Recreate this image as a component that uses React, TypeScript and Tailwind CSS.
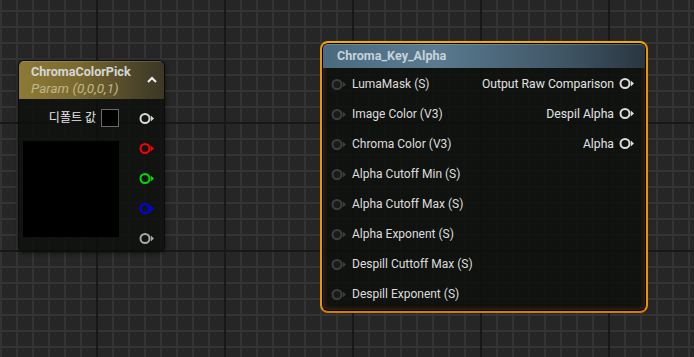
import React from "react";

function Pin({ color, fill = "none" }: { color: string; fill?: string }) {
  return (
    <svg width="16" height="13" viewBox="0 0 16 13" className="block shrink-0">
      <circle cx="6" cy="6.5" r="4.5" fill={fill} stroke={color} strokeWidth="2" />
      <path d="M11.8 3.6 L15 6.5 L11.8 9.4 Z" fill={color} />
    </svg>
  );
}

const inputs = [
  "LumaMask (S)",
  "Image Color (V3)",
  "Chroma Color (V3)",
  "Alpha Cutoff Min (S)",
  "Alpha Cutoff Max (S)",
  "Alpha Exponent (S)",
  "Despill Cuttoff Max (S)",
  "Despill Exponent (S)",
];
const outputs = ["Output Raw Comparison", "Despil Alpha", "Alpha"];

export default function App() {
  return (
    <div
      className="relative w-[694px] h-[357px] overflow-hidden bg-[#262626] font-['Roboto','Noto_Sans_CJK_KR',sans-serif] text-[12px] [background-image:linear-gradient(to_right,#181818_2px,transparent_2px),linear-gradient(to_bottom,#181818_2px,transparent_2px),linear-gradient(to_right,#343434_2px,transparent_2px),linear-gradient(to_bottom,#343434_2px,transparent_2px)] [background-size:128px_128px,128px_128px,16px_16px,16px_16px] [background-position:96px_0,0_122px,0_0,0_10px]"
    >
      {/* Node 1: ChromaColorPick */}
      <div className="absolute left-[18px] top-[60px] w-[147px] h-[192px] rounded-[6px] border border-[#0b0b0b] bg-[rgba(13,15,13,0.84)] shadow-[0_1px_4px_rgba(0,0,0,0.6)] overflow-hidden">
        <div className="relative h-[38px] pl-[12px] pt-[3px] bg-[linear-gradient(to_right,#8d7a36_0%,#7a6a2f_40%,#4c4529_80%,#3a3726_100%)] shadow-[inset_0_1px_0_rgba(255,255,255,0.15)]">
          <div className="leading-[16px] font-bold text-[12.6px] text-[#d6d6d6]">ChromaColorPick</div>
          <div className="leading-[16px] italic text-[13.5px] text-[#c4b58a]">Param (0,0,0,1)</div>
          <svg
            width="10"
            height="7"
            viewBox="0 0 10 7"
            className="absolute right-[7px] top-[15px]"
          >
            <path d="M1 6 L5 2 L9 6" fill="none" stroke="#f2f2f2" strokeWidth="2" />
          </svg>
        </div>
        <div className="flex pt-[4px]">
          <div className="w-[120px] pl-[4px] flex flex-col">
            <div className="h-[30px] flex items-center justify-end gap-[5px] pr-[20px]">
              <span className="text-[#e6e6e6] text-[12px]">디폴트 값</span>
              <div className="w-[18px] h-[18px] bg-black border border-[#6a6a6a]" />
            </div>
            <div className="mt-[8px] w-[96px] h-[96px] bg-black" />
          </div>
          <div className="flex flex-col">
            <div className="h-[30px] flex items-center"><Pin color="#d8d8d8" /></div>
            <div className="h-[30px] flex items-center"><Pin color="#ff0000" /></div>
            <div className="h-[30px] flex items-center"><Pin color="#00dd00" /></div>
            <div className="h-[30px] flex items-center"><Pin color="#0000ff" /></div>
            <div className="h-[30px] flex items-center"><Pin color="#a8a8a8" /></div>
          </div>
        </div>
      </div>

      {/* Node 2: Chroma_Key_Alpha */}
      <div className="absolute left-[320px] top-[41px] w-[328px] h-[272px] rounded-[8px] border-2 border-[#eb9600] border-t-[#f6ab00] border-b-[#dc7a00] bg-[rgba(13,15,13,0.86)] shadow-[inset_0_0_0_1px_#000,inset_0_0_4px_2px_rgba(90,58,0,0.6)] overflow-hidden">
        <div className="h-[24px] flex items-center pl-[14px] mx-[1px] mt-[1px] rounded-t-[5px] bg-[linear-gradient(to_right,#4a6a80_0%,#5a7a90_35%,#3f5565_75%,#2a3640_100%)] shadow-[inset_0_1px_0_rgba(255,255,255,0.18)]">
          <span className="font-bold text-[12.6px] text-[#c6d2da] leading-none">Chroma_Key_Alpha</span>
        </div>
        <div className="pt-[1px] flex flex-col">
          {inputs.map((label, i) => (
            <div key={label} className="h-[30px] flex items-center justify-between pl-[9px] pr-[11px]">
              <div className="flex items-center gap-[5px]">
                <Pin color="#3e3e3e" fill="#1a1a1a" />
                <span className="text-[#dedede]">{label}</span>
              </div>
              {outputs[i] && (
                <div className="flex items-center gap-[5px]">
                  <span className="text-[#e2e2e2] text-[12.2px]">{outputs[i]}</span>
                  <Pin color="#dcdcdc" />
                </div>
              )}
            </div>
          ))}
        </div>
      </div>
    </div>
  );
}
